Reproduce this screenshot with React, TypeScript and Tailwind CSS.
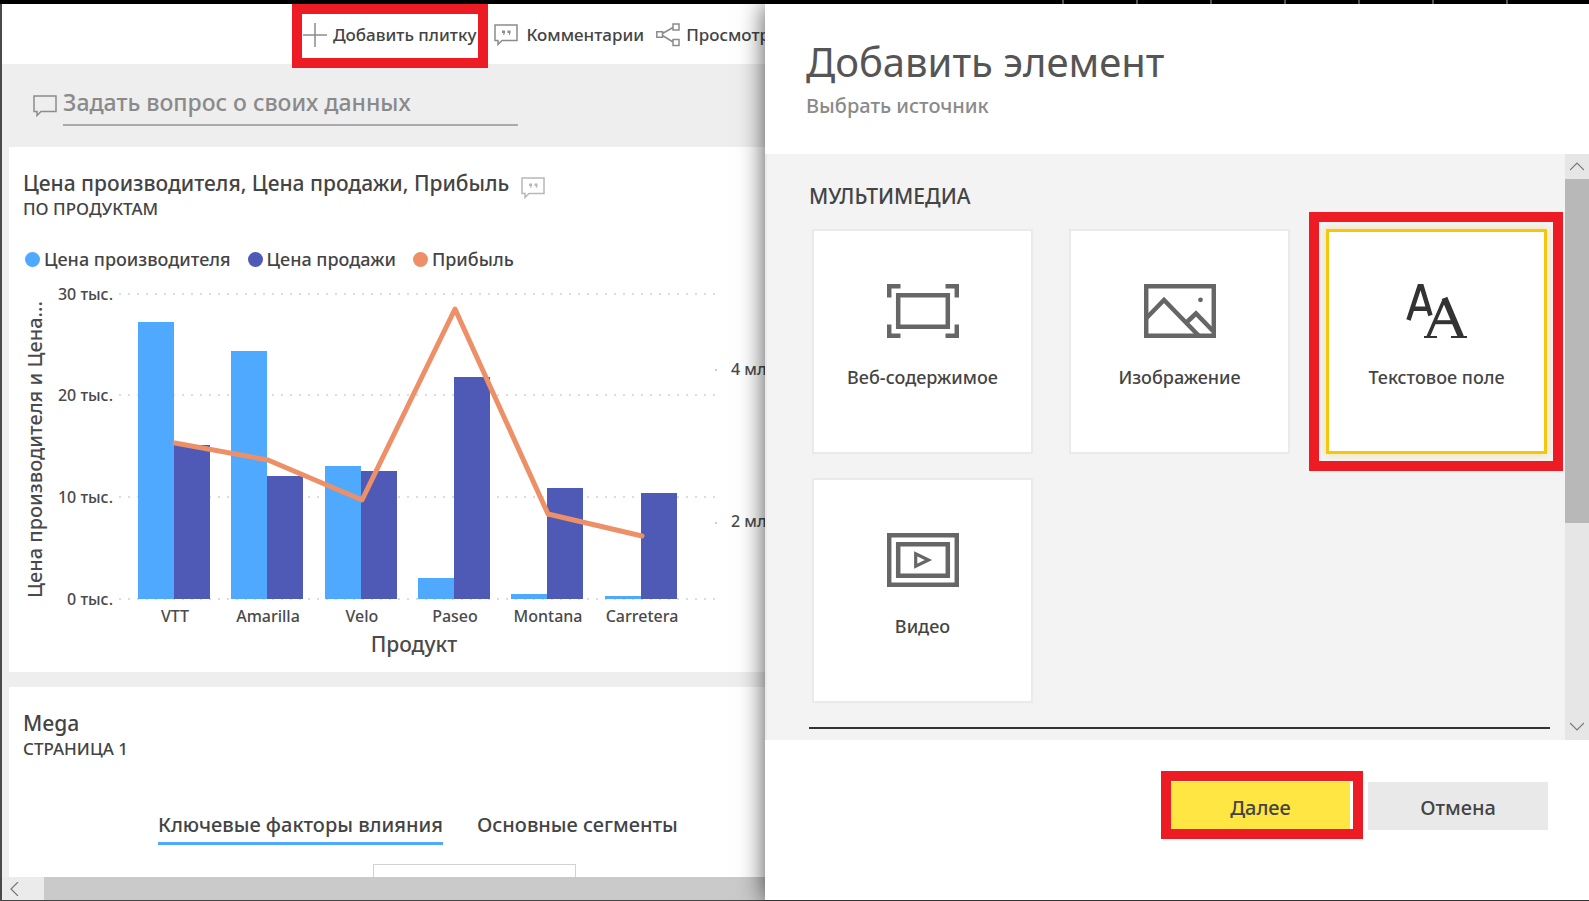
import { ReactNode, useState } from "react";

const products = [
  { name: "VTT", cost: 277, sale: 154, x: 129 },
  { name: "Amarilla", cost: 248, sale: 123, x: 222 },
  { name: "Velo", cost: 133, sale: 128, x: 316 },
  { name: "Paseo", cost: 21, sale: 222, x: 409 },
  { name: "Montana", cost: 5, sale: 111, x: 502 },
  { name: "Carretera", cost: 3, sale: 106, x: 596 },
];

const gridLines = [
  { y: 19, label: "30 тыс." },
  { y: 120, label: "20 тыс." },
  { y: 222, label: "10 тыс." },
  { y: 324, label: "0 тыс." },
];

const legend = [
  { label: "Цена производителя", dot: "bg-[#4ea9ff]" },
  { label: "Цена продажи", dot: "bg-[#4e5ab5]" },
  { label: "Прибыль", dot: "bg-[#ed9068]" },
];

function CommentIcon({ quotes = true, className = "" }: { quotes?: boolean; className?: string }) {
  return (
    <svg width="24" height="22" viewBox="0 0 24 22" fill="none" stroke="currentColor" strokeWidth="1.5" className={className} aria-hidden="true">
      <path d="M1 1H23V16.5H8L4 20.5V16.5H1Z" />
      {quotes && (
        <path
          d="M8 6.5h3v2.5l-1 2h-.8l.3-2H8zM13.5 6.5h3v2.5l-1 2h-.8l.3-2h-1.5z"
          fill="currentColor"
          stroke="none"
        />
      )}
    </svg>
  );
}

function PlusIcon() {
  return (
    <svg width="24" height="24" viewBox="0 0 24 24" stroke="#8c8c8c" strokeWidth="1.5" aria-hidden="true">
      <path d="M12 0V24M0 12H24" />
    </svg>
  );
}

function ShareIcon() {
  return (
    <svg width="24" height="24" viewBox="0 0 24 24" fill="none" stroke="#8c8c8c" strokeWidth="1.5" aria-hidden="true">
      <path d="M.8 8.8h5.7v5.4H.8zM17 1h6v6h-6zM17 16.5h6v6h-6zM6.5 10.5L17 4.5M6.5 12.5L17 19" />
    </svg>
  );
}

function WebIcon() {
  return (
    <svg width="72" height="54" viewBox="0 0 72 54" fill="none" stroke="#666" strokeWidth="4.5" aria-hidden="true">
      <path d="M2.2 13.5V2.2H13.5M58.5 2.2H69.8V13.5M69.8 40.5V51.8H58.5M13.5 51.8H2.2V40.5" />
      <path d="M11.2 11.2H60.8V42.8H11.2Z" />
    </svg>
  );
}

function ImageIcon() {
  return (
    <svg width="72" height="54" viewBox="0 0 72 54" fill="none" stroke="#666" strokeWidth="4.5" aria-hidden="true">
      <path d="M2.2 2.2H69.8V51.8H2.2Z" />
      <path d="M2.5 34L20 16L55 52M43 38L52 29.5L69 47" />
      <circle cx="56.5" cy="15.8" r="2.4" fill="#666" stroke="none" />
    </svg>
  );
}

function VideoIcon() {
  return (
    <svg width="72" height="54" viewBox="0 0 72 54" fill="none" stroke="#666" aria-hidden="true">
      <path d="M2.2 2.2H69.8V51.8H2.2ZM11.2 11.2H60.8V42.8H11.2Z" strokeWidth="4.5" />
      <path d="M28.7 20.8V33.2L41.5 27Z" strokeWidth="3.2" />
    </svg>
  );
}

// Sans "A" half hidden behind a serif one
function TextBoxIcon() {
  return (
    <svg width="62" height="54" viewBox="0 0 62 54" fill="none" stroke="#333" aria-hidden="true">
      <path d="M2.5 36L13.6 2H15.6L24.5 31.5M7 24.8H22" strokeWidth="4.5" />
      <path d="M22 53L38.5 15" strokeWidth="3.5" />
      <path d="M38.5 14L55 53" strokeWidth="6" />
      <path d="M29 38.2H48" strokeWidth="4" />
      <path d="M18 53H31M45 53H61" strokeWidth="2" />
    </svg>
  );
}

function Chevron({ d }: { d: string }) {
  return (
    <svg width="14" height="14" viewBox="0 0 14 14" fill="none" stroke="#777" strokeWidth="1.2" aria-hidden="true">
      <path d={d} />
    </svg>
  );
}

function ProductChart() {
  return (
    <svg viewBox="0 0 756 384" className="block w-full fill-[#4a4a4a] font-medium" role="img" aria-label="Цена производителя, Цена продажи, Прибыль по продуктам">
      {gridLines.map((line) => (
        <g key={line.y}>
          <line x1="110" x2="706" y1={line.y} y2={line.y} stroke="#dcdcdc" strokeWidth="2" strokeDasharray="2 7" />
          <text x="104" y={line.y + 6} textAnchor="end" fontSize="16">
            {line.label}
          </text>
        </g>
      ))}

      {products.map((p) => (
        <g key={p.name}>
          <rect x={p.x} y={324 - p.cost} width="36" height={p.cost} fill="#4ea9ff" />
          <rect x={p.x + 36} y={324 - p.sale} width="36" height={p.sale} fill="#4e5ab5" />
          <text x={p.x + 37} y="347" textAnchor="middle" fontSize="16">
            {p.name}
          </text>
        </g>
      ))}

      <polyline
        points="166,168 259,185 353,225 446,34 539,239 633,261"
        fill="none"
        stroke="#ed9068"
        strokeWidth="5"
        strokeLinecap="round"
        strokeLinejoin="round"
      />

      <rect x="706" y="94" width="2" height="2" fill="#ccc" />
      <rect x="706" y="247" width="2" height="2" fill="#ccc" />
      <text x="722" y="100" fontSize="16">4 млн</text>
      <text x="722" y="252" fontSize="16">2 млн</text>

      <text x="405" y="377" textAnchor="middle" fontSize="21">Продукт</text>
      <text transform="translate(33 323) rotate(-90)" fontSize="20">
        Цена производителя и Цена...
      </text>
    </svg>
  );
}

function Dashboard() {
  return (
    <main className="flex min-w-0 flex-col overflow-hidden border-l-2 border-[#4a4a4a] bg-[#eee]">
      <header className="flex h-[60px] shrink-0 items-center justify-end bg-white pt-[2px] whitespace-nowrap">
        <div className="-mr-8 flex items-center gap-3 text-[17px] leading-6 font-medium text-[#444]">
          <div className="relative">
            <button type="button" className="flex items-center gap-1.5">
              <PlusIcon />
              Добавить плитку
            </button>
            <span className="pointer-events-none absolute -top-[19px] -right-[12px] -bottom-[21px] -left-[11px] border-10 border-[#ed1c24]" />
          </div>
          <button type="button" className="ml-1.5 flex items-center gap-2">
            <CommentIcon className="text-[#8c8c8c]" />
            Комментарии
          </button>
          <button type="button" className="flex items-center gap-1.5">
            <ShareIcon />
            Просмотреть
          </button>
        </div>
      </header>

      <div className="flex h-[83px] shrink-0 items-center pl-[31px]">
        <label htmlFor="question" aria-label="Вопрос">
          <CommentIcon quotes={false} className="text-[#8c8c8c]" />
        </label>
        <input
          id="question"
          type="text"
          placeholder="Задать вопрос о своих данных"
          className="mb-[3px] ml-1.5 h-[44px] w-[455px] border-b-2 border-[#ababab] bg-transparent pb-0.5 text-[23px] font-medium outline-none placeholder:text-[#8a8a8a]"
        />
      </div>

      <section className="ml-[7px] shrink-0 bg-white pt-[20px] text-[#444]">
        <div className="flex items-center gap-3 pl-[14px]">
          <h2 className="text-[21px] leading-8 font-medium whitespace-nowrap">Цена производителя, Цена продажи, Прибыль</h2>
          <button type="button" aria-label="Комментарии" className="mt-2.5 text-[#b8b8b8]">
            <CommentIcon />
          </button>
        </div>
        <p className="pl-[14px] text-[17px] leading-5 font-medium">ПО ПРОДУКТАМ</p>
        <ul className="mt-[26px] mb-0.5 flex gap-[17px] pl-4 text-[18px] leading-7 font-medium whitespace-nowrap">
          {legend.map((item) => (
            <li key={item.label} className="flex items-center gap-1">
              <span className={`size-[15px] rounded-full ${item.dot}`} />
              {item.label}
            </li>
          ))}
        </ul>
        <ProductChart />
        <div className="h-[13px]" />
      </section>

      <section className="mt-[15px] ml-[7px] min-h-0 flex-1 overflow-hidden bg-white pt-[20px] text-[#444]">
        <h2 className="pl-[14px] text-[21px] leading-8 font-medium">Mega</h2>
        <p className="pl-[14px] text-[17px] leading-5 font-medium">СТРАНИЦА 1</p>
        <div className="mt-[50px] flex gap-[34px] pl-[149px] text-[20px] leading-8 font-medium whitespace-nowrap">
          <button type="button" className="border-b-3 border-[#4ea9ff] pb-px">Ключевые факторы влияния</button>
          <button type="button" className="border-b-3 border-transparent pb-px">Основные сегменты</button>
        </div>
        <div className="mt-[19px] ml-[364px] h-10 w-[203px] border border-[#d2d2d2]" />
      </section>

      <div className="flex h-[24px] shrink-0 border-b border-[#444] bg-[#ebebeb]">
        <button type="button" aria-label="Прокрутить влево" className="flex w-[42px] items-center pl-[7px]">
          <Chevron d="M9 0L2 7L9 14" />
        </button>
        <div className="flex-1 bg-[#cacaca]" />
      </div>
    </main>
  );
}

interface TileProps {
  icon: ReactNode;
  label: string;
  selected: boolean;
  onSelect: () => void;
}

function Tile({ icon, label, selected, onSelect }: TileProps) {
  return (
    <div className="relative h-[225px] w-[221px]">
      <button
        type="button"
        onClick={onSelect}
        className={`flex size-full flex-col items-center bg-white text-[18px] font-medium text-[#444] ${
          selected ? "border-3 border-[#f4c60e] pt-[52px] shadow-[0_0_8px_#f4c60e66]" : "border-2 border-[#eaeaea] pt-[53px]"
        }`}
      >
        {icon}
        <span className="mt-[27px] leading-6">{label}</span>
      </button>
      {selected && <span className="pointer-events-none absolute -inset-y-[17px] -right-[16px] -left-[17px] border-10 border-[#ed1c24]" />}
    </div>
  );
}

const tiles = [
  { label: "Веб-содержимое", icon: <WebIcon /> },
  { label: "Изображение", icon: <ImageIcon /> },
  { label: "Текстовое поле", icon: <TextBoxIcon /> },
  { label: "Видео", icon: <VideoIcon /> },
];

function AddTilePanel() {
  const [selected, setSelected] = useState("Текстовое поле");

  return (
    <aside className="relative flex min-w-0 flex-col border-b border-[#333] bg-white shadow-[0_0_24px_#000000b0]">
      <header className="h-[150px] shrink-0 pt-[26px] pl-[41px]">
        <h1 className="text-[40px] leading-[64px] text-[#555]">Добавить элемент</h1>
        <p className="text-[20px] leading-6 font-medium text-[#8a8a8a]">Выбрать источник</p>
      </header>

      <div className="flex min-h-0 flex-1 border-l-2 border-[#eaeaea] bg-[#f3f3f3]">
        <div className="min-w-0 flex-1 overflow-hidden pt-[26px] pl-[42px]">
          <h2 className="text-[21px] leading-8 font-medium text-[#444]">МУЛЬТИМЕДИА</h2>
          <div className="mt-[17px] flex flex-wrap gap-x-[36px] gap-y-[24px] pl-[3px]">
            {tiles.map((tile) => (
              <Tile
                key={tile.label}
                icon={tile.icon}
                label={tile.label}
                selected={selected === tile.label}
                onSelect={() => setSelected(tile.label)}
              />
            ))}
          </div>
          <hr className="mt-[24px] mr-[15px] border-t-2 border-[#333]" />
        </div>

        {/* Scroll bar */}
        <div className="flex w-[24px] shrink-0 flex-col bg-[#e6e6e6]">
          <button type="button" aria-label="Прокрутить вверх" className="flex h-[25px] items-center justify-center">
            <Chevron d="M0 10L7 3L14 10" />
          </button>
          <div className="h-[344px] bg-[#b8b8b8]" />
          <div className="flex-1" />
          <button type="button" aria-label="Прокрутить вниз" className="flex h-[28px] items-center justify-center">
            <Chevron d="M0 4L7 11L14 4" />
          </button>
        </div>
      </div>

      <footer className="flex h-[160px] shrink-0 justify-end gap-[18px] pt-[42px] pr-[41px] text-[20px] font-medium text-[#444]">
        <div className="relative h-[48px]">
          <button type="button" className="h-full w-[179px] bg-[#ffe642] pt-1">Далее</button>
          <span className="pointer-events-none absolute -top-[11px] -right-[13px] -bottom-[9px] -left-[10px] border-10 border-[#ed1c24]" />
        </div>
        <button type="button" className="h-[48px] w-[180px] bg-[#e9e9e9] pt-1">Отмена</button>
      </footer>
    </aside>
  );
}

export default function App() {
  return (
    <div className="flex h-screen flex-col font-['Noto_Sans','Open_Sans',sans-serif]">
      <div className="flex h-1 shrink-0 justify-end gap-[72px] bg-black pr-[81px]">
        {[1, 2, 3, 4, 5, 6, 7].map((n) => (
          <span key={n} className="w-[2px] bg-[#777]" />
        ))}
      </div>
      <div className="grid min-h-0 flex-1 grid-cols-[minmax(0,765fr)_minmax(0,824fr)]">
        <Dashboard />
        <AddTilePanel />
      </div>
    </div>
  );
}
